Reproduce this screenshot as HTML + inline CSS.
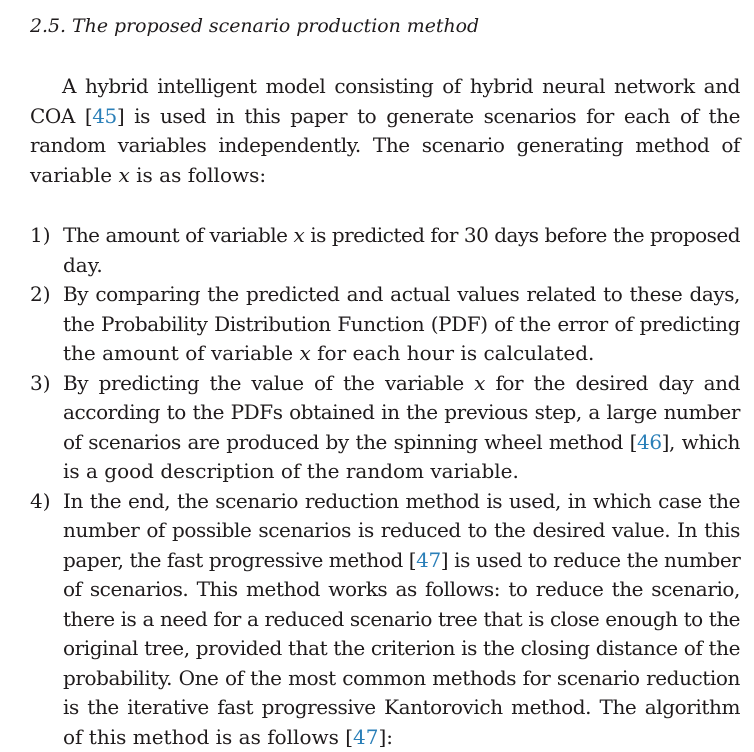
<!DOCTYPE html>
<html><head><meta charset="utf-8"><style>
body{margin:0;background:#fff;width:754px;height:751px;overflow:hidden;font-family:"DejaVu Serif","Liberation Serif",serif;color:#1f1b1c;}
.h{position:absolute;left:30px;top:15px;font-size:18.9px;font-style:italic;}
.l{position:absolute;font-size:20px;letter-spacing:-0.42px;line-height:29.5px;height:29.5px;white-space:nowrap;text-align:justify;text-align-last:justify;}
.l.e{text-align-last:left;letter-spacing:0}
.l.t{letter-spacing:-0.52px}
a{color:#2a7fb8;text-decoration:none}
.n{position:absolute;left:30px;font-size:20px;line-height:29.5px}
</style></head><body>
<div class="h">2.5. The proposed scenario production method</div>
<div class="l" style="left:62px;width:678px;top:72px">A hybrid intelligent model consisting of hybrid neural network and</div>
<div class="l" style="left:30px;width:710px;top:101.5px">COA [<a>45</a>] is used in this paper to generate scenarios for each of the</div>
<div class="l" style="left:30px;width:710px;top:131px">random variables independently. The scenario generating method of</div>
<div class="l e" style="left:30px;width:710px;top:160.5px">variable <i>x</i> is as follows:</div>

<div class="n" style="top:221px">1)</div>
<div class="l t" style="left:63px;width:677px;top:221px">The amount of variable <i>x</i> is predicted for 30 days before the proposed</div>
<div class="l e" style="left:63px;width:677px;top:250.5px">day.</div>
<div class="n" style="top:280px">2)</div>
<div class="l" style="left:63px;width:677px;top:280px">By comparing the predicted and actual values related to these days,</div>
<div class="l" style="left:63px;width:677px;top:309.5px">the Probability Distribution Function (PDF) of the error of predicting</div>
<div class="l e" style="left:63px;width:677px;top:339px">the amount of variable <i>x</i> for each hour is calculated.</div>
<div class="n" style="top:368.5px">3)</div>
<div class="l" style="left:63px;width:677px;top:368.5px">By predicting the value of the variable <i>x</i> for the desired day and</div>
<div class="l" style="left:63px;width:677px;top:398px">according to the PDFs obtained in the previous step, a large number</div>
<div class="l" style="left:63px;width:677px;top:427.5px">of scenarios are produced by the spinning wheel method [<a>46</a>], which</div>
<div class="l e" style="left:63px;width:677px;top:457px">is a good description of the random variable.</div>
<div class="n" style="top:486.5px">4)</div>
<div class="l" style="left:63px;width:677px;top:486.5px">In the end, the scenario reduction method is used, in which case the</div>
<div class="l" style="left:63px;width:677px;top:516px">number of possible scenarios is reduced to the desired value. In this</div>
<div class="l" style="left:63px;width:677px;top:545.5px">paper, the fast progressive method [<a>47</a>] is used to reduce the number</div>
<div class="l" style="left:63px;width:677px;top:575px">of scenarios. This method works as follows: to reduce the scenario,</div>
<div class="l t" style="left:63px;width:677px;top:604.5px">there is a need for a reduced scenario tree that is close enough to the</div>
<div class="l" style="left:63px;width:677px;top:634px">original tree, provided that the criterion is the closing distance of the</div>
<div class="l" style="left:63px;width:677px;top:663.5px">probability. One of the most common methods for scenario reduction</div>
<div class="l" style="left:63px;width:677px;top:693px">is the iterative fast progressive Kantorovich method. The algorithm</div>
<div class="l e" style="left:63px;width:677px;top:722.5px">of this method is as follows [<a>47</a>]:</div>
</body></html>
